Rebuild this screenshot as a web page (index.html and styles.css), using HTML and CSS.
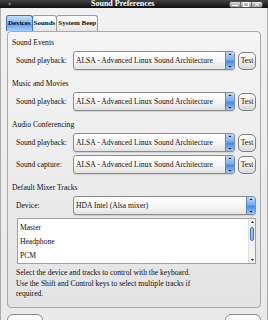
FILE: index.html
```html
<!DOCTYPE html>
<html lang="en">
<head>
  <meta charset="UTF-8" />
  <title>Sound Preferences</title>
  <link rel="stylesheet" href="styles.css">
</head>
<body>
<div class="window">
  <div class="titlebar">
    <span class="menu-arrow">▾</span>
    <span class="title">Sound Preferences</span>
    <svg class="win-controls" width="34" height="7" viewBox="0 0 34 7">
      <defs>
        <linearGradient id="wc" x1="0" y1="0" x2="0" y2="1">
          <stop offset="0" stop-color="#e6e6e6"/>
          <stop offset="1" stop-color="#8a8a8a"/>
        </linearGradient>
      </defs>
      <rect x="0.5" y="0.5" width="33" height="6" rx="2" fill="url(#wc)" stroke="#4a4a4a"/>
      <line x1="11.5" y1="1" x2="11.5" y2="6" stroke="#6a6a6a"/>
      <line x1="22.5" y1="1" x2="22.5" y2="6" stroke="#6a6a6a"/>
      <line x1="3" y1="4.5" x2="9" y2="4.5" stroke="#fff"/>
      <rect x="14.5" y="1.5" width="5" height="4" fill="none" stroke="#fff"/>
      <path d="M26 1.5 L30 5.5 M30 1.5 L26 5.5" stroke="#fff"/>
    </svg>
  </div>

  <div class="frame">
    <div class="tabs">
      <span class="tab active">Devices</span>
      <span class="tab">Sounds</span>
      <span class="tab">System Beep</span>
    </div>

    <div class="pane">
      <div class="section">
        <div class="section-title">Sound Events</div>
        <div class="row">
          <span class="label">Sound playback:</span>
          <div class="combo">
            <span class="combo-text">ALSA - Advanced Linux Sound Architecture</span>
            <span class="combo-arrow"><svg width="8" height="17" viewBox="0 0 8 17"><path d="M2.5 3 L4 1.5 L5.5 3 Z M2.5 14 L4 15.5 L5.5 14 Z" fill="#111"/></svg></span>
          </div>
          <button class="test-btn">Test</button>
        </div>
      </div>

      <div class="section">
        <div class="section-title">Music and Movies</div>
        <div class="row">
          <span class="label">Sound playback:</span>
          <div class="combo">
            <span class="combo-text">ALSA - Advanced Linux Sound Architecture</span>
            <span class="combo-arrow"><svg width="8" height="17" viewBox="0 0 8 17"><path d="M2.5 3 L4 1.5 L5.5 3 Z M2.5 14 L4 15.5 L5.5 14 Z" fill="#111"/></svg></span>
          </div>
          <button class="test-btn">Test</button>
        </div>
      </div>

      <div class="section">
        <div class="section-title">Audio Conferencing</div>
        <div class="row">
          <span class="label">Sound playback:</span>
          <div class="combo">
            <span class="combo-text">ALSA - Advanced Linux Sound Architecture</span>
            <span class="combo-arrow"><svg width="8" height="17" viewBox="0 0 8 17"><path d="M2.5 3 L4 1.5 L5.5 3 Z M2.5 14 L4 15.5 L5.5 14 Z" fill="#111"/></svg></span>
          </div>
          <button class="test-btn">Test</button>
        </div>
        <div class="row">
          <span class="label">Sound capture:</span>
          <div class="combo">
            <span class="combo-text">ALSA - Advanced Linux Sound Architecture</span>
            <span class="combo-arrow"><svg width="8" height="17" viewBox="0 0 8 17"><path d="M2.5 3 L4 1.5 L5.5 3 Z M2.5 14 L4 15.5 L5.5 14 Z" fill="#111"/></svg></span>
          </div>
          <button class="test-btn">Test</button>
        </div>
      </div>

      <div class="section">
        <div class="section-title">Default Mixer Tracks</div>
        <div class="row">
          <span class="label">Device:</span>
          <div class="combo">
            <span class="combo-text">HDA Intel (Alsa mixer)</span>
            <span class="combo-arrow"><svg width="8" height="17" viewBox="0 0 8 17"><path d="M2.5 3 L4 1.5 L5.5 3 Z M2.5 14 L4 15.5 L5.5 14 Z" fill="#111"/></svg></span>
          </div>
        </div>
        <div class="track-list">
          <ul class="tracks">
            <li>Master</li>
            <li>Headphone</li>
            <li>PCM</li>
          </ul>
          <div class="scrollbar">
            <svg width="7" height="6" viewBox="0 0 7 6"><path d="M2 4 L3.5 2 L5 4 Z" fill="#222"/></svg>
            <div class="track"><div class="thumb"></div></div>
            <svg width="7" height="6" viewBox="0 0 7 6"><path d="M2 2 L3.5 4 L5 2 Z" fill="#222"/></svg>
          </div>
        </div>
        <p class="help">Select the device and tracks to control with the keyboard. Use the Shift and Control keys to select multiple tracks if required.</p>
      </div>
    </div>

    <div class="bottom-bar">
      <button class="dlg-btn"></button>
      <button class="dlg-btn"></button>
    </div>
  </div>
</div>
</body>
</html>
```

FILE: styles.css
```css
* {
  box-sizing: border-box;
}
body {
  margin: 0;
  font-family: "Liberation Serif", "DejaVu Serif", serif;
  font-size: 7.6px;
  color: #0d0d0d;
  background: #ececec;
}
.window {
  width: 268px;
  height: 320px;
  overflow: hidden;
  display: flex;
  flex-direction: column;
}
.titlebar {
  height: 8px;
  flex: none;
  display: flex;
  align-items: center;
  padding: 0 5px 0 8px;
  background: linear-gradient(#424242, #111111);
}
.menu-arrow {
  color: #777;
  font-size: 6px;
  line-height: 8px;
  width: 5px;
}
.title {
  margin-left: 78px;
  color: #fff;
  font-weight: bold;
  font-size: 8px;
  line-height: 8px;
}
.win-controls {
  margin-left: auto;
  display: block;
}
.frame {
  flex: 1;
  border-left: 1px solid #a9a9a9;
  border-right: 1px solid #a9a9a9;
  background: linear-gradient(#f1f1f1, #e9e9e9);
}
.tabs {
  display: flex;
  margin: 7px 0 0 5px;
  height: 16px;
}
.tab {
  height: 16px;
  line-height: 15px;
  padding: 0 1px;
  font-size: 7px;
  font-weight: bold;
  border: 1px solid #9c9c9c;
  border-bottom: none;
  border-radius: 3px 3px 0 0;
  background: linear-gradient(#fefefe, #e4e4e4);
}
.tab + .tab {
  margin-left: -1px;
}
.tab.active {
  border-color: #3e73c4;
  background: linear-gradient(#c6e0fa, #7fb4ef 50%, #5c9de7 51%, #a7cff7);
  position: relative;
  z-index: 1;
}
.pane {
  margin: 0 6px;
  height: 277px;
  border: 1px solid #a9a9a9;
  border-radius: 4px;
  background: linear-gradient(#f5f5f5, #e3e3e3);
  padding: 5px 4px 0 4px;
}
.section + .section {
  margin-top: 8px;
}
.section-title {
  height: 12px;
  line-height: 12px;
  margin-bottom: 2px;
}
.row {
  display: flex;
  align-items: center;
  height: 19px;
  padding-left: 4px;
}
.row + .row {
  margin-top: 3px;
}
.label {
  width: 57px;
  flex: none;
}
.combo {
  flex: 1;
  display: flex;
  height: 19px;
  border: 1px solid #8c8c8c;
  border-radius: 3px;
  background: linear-gradient(#ffffff, #f6f6f6 55%, #e2e2e2);
  box-shadow: 0 1px 1px rgba(0,0,0,0.12);
  overflow: hidden;
}
.combo-text {
  flex: 1;
  padding-left: 2px;
  line-height: 17px;
  white-space: nowrap;
  overflow: hidden;
}
.combo-arrow {
  width: 9px;
  flex: none;
  border-left: 1px solid #5a8ccc;
  background: linear-gradient(#bcdaf8, #78aeee 45%, #4a8ce0 55%, #9cc7f4);
}
.combo-arrow svg {
  display: block;
}
.test-btn {
  width: 18px;
  height: 18px;
  flex: none;
  margin-left: 3px;
  padding: 0;
  font: inherit;
  color: #111;
  border: 1px solid #7f7f7f;
  border-radius: 5px;
  background: linear-gradient(#ffffff, #ececec 60%, #d8d8d8);
}
.track-list {
  display: flex;
  margin: 3px 0 0 5px;
  height: 46px;
  border: 1px solid #a0a0a0;
  background: #fff;
  overflow: hidden;
}
.tracks {
  flex: 1;
  list-style: none;
  margin: 0;
  padding: 2px 0 0 2px;
}
.tracks li {
  height: 14px;
  line-height: 14px;
}
.scrollbar {
  width: 7px;
  flex: none;
  display: flex;
  flex-direction: column;
  background: #f2f2f2;
  border-left: 1px solid #e0e0e0;
}
.scrollbar svg {
  display: block;
}
.scrollbar .track {
  flex: 1;
  padding: 2px 1px 0;
}
.thumb {
  height: 14px;
  border: 1px solid #3f75c2;
  border-radius: 3px;
  background: linear-gradient(90deg, #6ea6ea, #bfdcf9 50%, #6ea6ea);
}
.help {
  width: 190px;
  margin: 4px 0 0;
  padding-left: 4px;
  line-height: 10.7px;
}
.bottom-bar {
  display: flex;
  justify-content: space-between;
  margin-top: 6px;
  padding: 0 6px;
}
.dlg-btn {
  width: 36px;
  height: 20px;
  border: 1px solid #8a8a8a;
  border-radius: 6px;
  background: linear-gradient(#ffffff, #e4e4e4);
}
```
